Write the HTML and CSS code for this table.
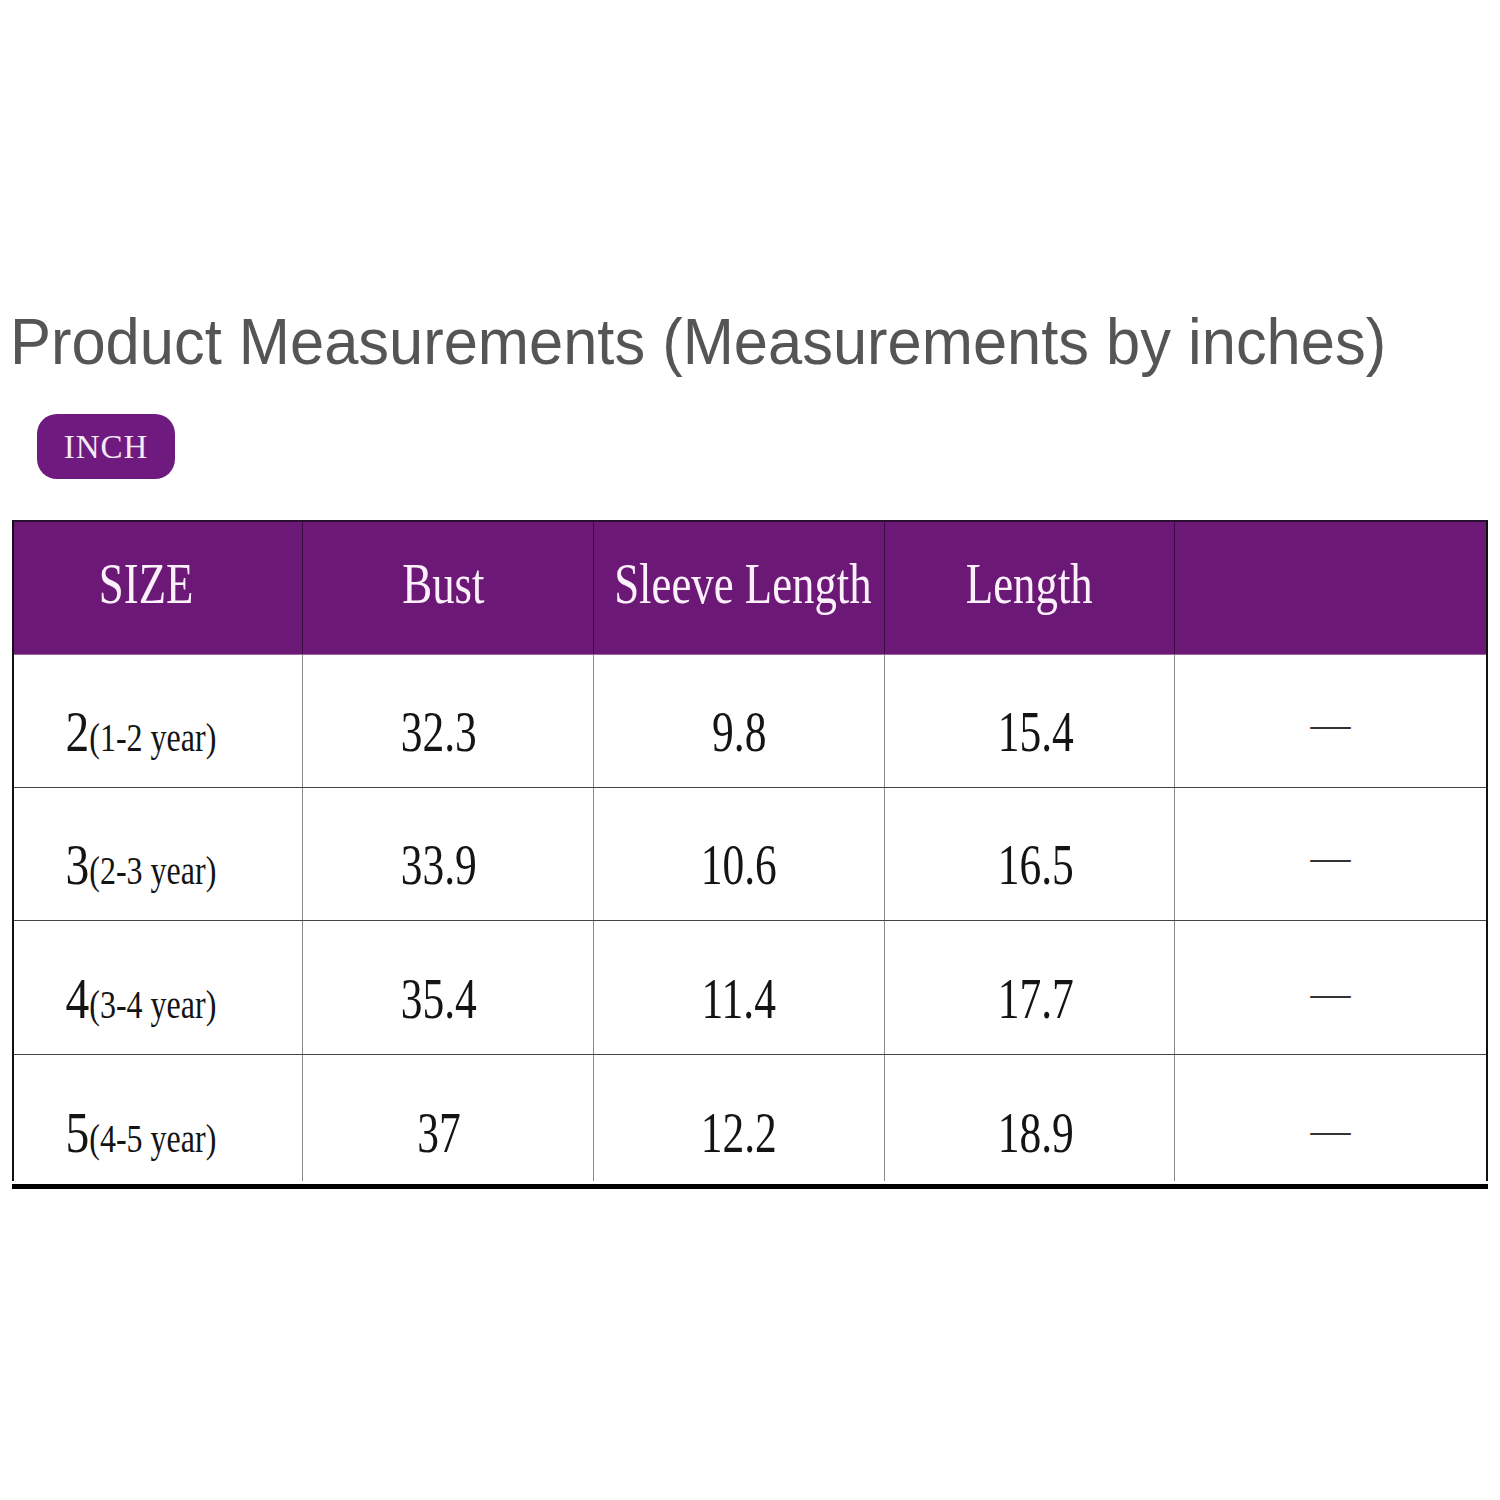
FILE: index.html
```html
<!DOCTYPE html>
<html lang="en">
<head>
<meta charset="utf-8">
<title>Product Measurements</title>
<link rel="stylesheet" href="styles.css">
</head>
<body>
<div class="page">
  <h1 class="title">Product Measurements (Measurements by inches)</h1>
  <div class="pill"><span>INCH</span></div>
  <div class="table">
    <div class="row head">
      <div class="cell c1"><span class="hx">SIZE</span></div>
      <div class="cell c2"><span class="hx">Bust</span></div>
      <div class="cell c3"><span class="hx">Sleeve Length</span></div>
      <div class="cell c4"><span class="hx">Length</span></div>
      <div class="cell c5"></div>
    </div>
    <div class="row body">
      <div class="cell c1"><span class="sz"><b>2</b><i>(1-2 year)</i></span></div>
      <div class="cell c2"><span class="num">32.3</span></div>
      <div class="cell c3"><span class="num">9.8</span></div>
      <div class="cell c4"><span class="num">15.4</span></div>
      <div class="cell c5"><span class="dash">—</span></div>
    </div>
    <div class="row body">
      <div class="cell c1"><span class="sz"><b>3</b><i>(2-3 year)</i></span></div>
      <div class="cell c2"><span class="num">33.9</span></div>
      <div class="cell c3"><span class="num">10.6</span></div>
      <div class="cell c4"><span class="num">16.5</span></div>
      <div class="cell c5"><span class="dash">—</span></div>
    </div>
    <div class="row body tall">
      <div class="cell c1"><span class="sz"><b>4</b><i>(3-4 year)</i></span></div>
      <div class="cell c2"><span class="num">35.4</span></div>
      <div class="cell c3"><span class="num">11.4</span></div>
      <div class="cell c4"><span class="num">17.7</span></div>
      <div class="cell c5"><span class="dash">—</span></div>
    </div>
    <div class="row body last">
      <div class="cell c1"><span class="sz"><b>5</b><i>(4-5 year)</i></span></div>
      <div class="cell c2"><span class="num">37</span></div>
      <div class="cell c3"><span class="num">12.2</span></div>
      <div class="cell c4"><span class="num">18.9</span></div>
      <div class="cell c5"><span class="dash">—</span></div>
    </div>
  </div>
  <div class="rule"></div>
</div>
</body>
</html>
```

FILE: styles.css
```css
html, body {
  margin: 0;
  padding: 0;
  background: #ffffff;
}

.page {
  padding: 305px 0 0 12px;
  width: 1476px;
}

.title {
  margin: 0 0 0 -2px;
  font-family: "Liberation Sans", Arial, sans-serif;
  font-weight: normal;
  font-size: 64px;
  line-height: 75px;
  color: #555555;
  white-space: nowrap;
  transform: scaleX(0.96);
  transform-origin: left center;
}

.pill {
  margin: 34px 0 0 25px;
  width: 138px;
  height: 65px;
  border-radius: 20px;
  background: #6e1a7e;
  display: flex;
  align-items: center;
  justify-content: center;
}

.pill span {
  font-family: "Liberation Serif", "Times New Roman", serif;
  font-size: 33px;
  line-height: 1;
  letter-spacing: 1px;
  color: #f6e9f6;
  padding-top: 1px;
}

.table {
  margin-top: 41px;
  border-top: 2px solid #2a1030;
  border-left: 2px solid #111111;
  border-right: 2px solid #111111;
  font-family: "Liberation Serif", "Times New Roman", serif;
}

.row {
  box-sizing: border-box;
  display: grid;
  grid-template-columns: 289px 291px 291px 290px 1fr;
}

.cell {
  box-sizing: border-box;
  display: flex;
  align-items: center;
  justify-content: center;
  border-right: 1px solid #8a8a8a;
  line-height: 1;
}

.cell.c5 {
  border-right: none;
}

.head {
  height: 133px;
  background: #6c1877;
  border-bottom: 1px solid #a0609c;
}

.head .cell {
  border-right-color: #3a0c42;
  padding-bottom: 8px;
}

.hx {
  display: inline-block;
  font-size: 56px;
  color: #fcf1fb;
  transform: scaleX(0.8);
  white-space: nowrap;
}

.head .c1 { padding-right: 24px; }
.head .c2 { padding-right: 10px; }
.head .c3 { padding-left: 8px; }

.body {
  height: 133px;
  border-bottom: 1px solid #444444;
}

.body.tall {
  height: 134px;
}

.body.last {
  height: 126px;
  border-bottom: none;
}

.body .cell {
  padding-top: 22px;
}

.body.last .cell {
  padding-top: 30px;
}

.num {
  display: inline-block;
  font-size: 58px;
  color: #141414;
  transform: scaleX(0.75);
  white-space: nowrap;
}

.body .c1 { padding-right: 34px; }
.body .c2 { padding-right: 18px; }
.body .c4 { padding-left: 12px; }

.sz {
  display: inline-block;
  color: #141414;
  white-space: nowrap;
  transform: scaleX(0.82);
}

.sz b {
  font-weight: normal;
  font-size: 58px;
}

.sz i {
  font-style: normal;
  font-size: 39px;
}

.dash {
  display: inline-block;
  font-size: 40px;
  color: #333333;
  margin-top: -17px;
}

.body.tall .dash {
  margin-top: -12px;
}

.body.last .dash {
  margin-top: -6px;
}

.rule {
  margin-top: 3px;
  height: 5px;
  background: #000000;
}
```
